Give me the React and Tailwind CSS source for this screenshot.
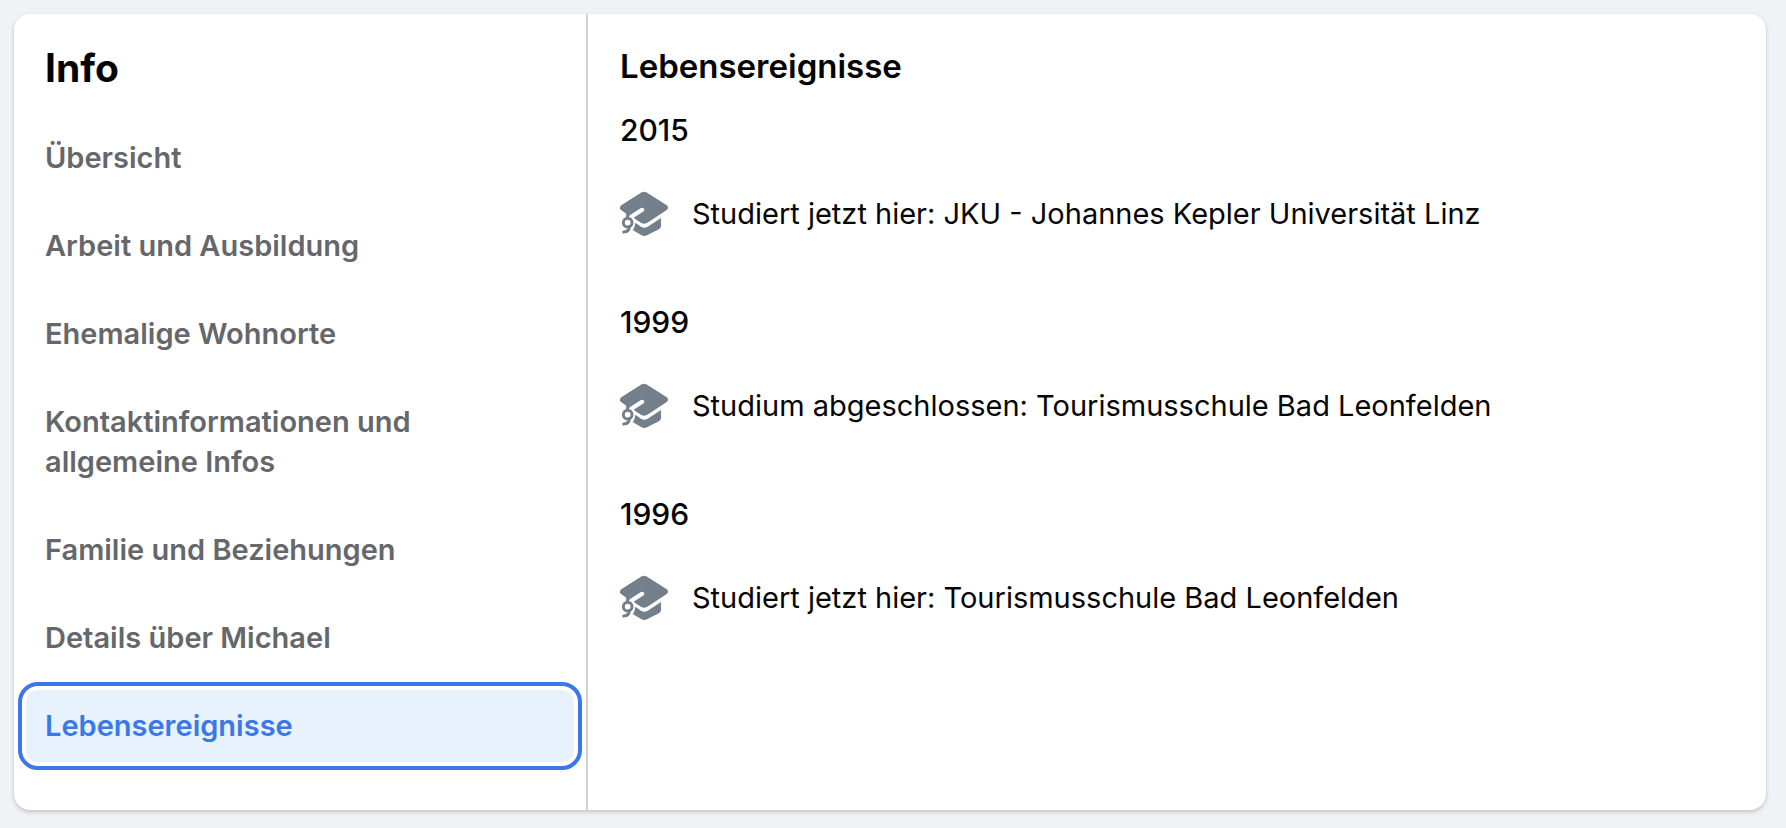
const sections = [
  { id: 'overview', label: 'Übersicht' },
  { id: 'work', label: 'Arbeit und Ausbildung' },
  { id: 'places', label: 'Ehemalige Wohnorte' },
  { id: 'contact', label: 'Kontaktinformationen und allgemeine Infos' },
  { id: 'family', label: 'Familie und Beziehungen' },
  { id: 'details', label: 'Details über Michael' },
  { id: 'events', label: 'Lebensereignisse' },
];

const lifeEvents = [
  { year: '2015', text: 'Studiert jetzt hier: JKU - Johannes Kepler Universität Linz' },
  { year: '1999', text: 'Studium abgeschlossen: Tourismusschule Bad Leonfelden' },
  { year: '1996', text: 'Studiert jetzt hier: Tourismusschule Bad Leonfelden' },
];

// Graduation cap with tassel
function CapIcon() {
  return (
    <svg viewBox="0 0 144 144" className="size-12 shrink-0 text-[#757e8b]" aria-hidden="true">
      <path
        fill="currentColor"
        d="M65 7Q72 3 79 7L138 44Q150 52 139 61L82 98Q73 104 64 99L44 86Q41 83 45 80L69 65Q75 61 72 56Q69 51 63 54L36 71Q31 74 28 77L4 61Q-6 53 5 45Z"
      />
      <path
        fill="currentColor"
        d="M46 98L63 110Q73 116 83 110L123 84V108Q123 113 118 117L81 136Q73 140 65 136L39 121Q44 112 46 98Z"
      />
      <g fill="none" stroke="currentColor" strokeLinecap="round">
        <path d="M23 68V84" strokeWidth="9" />
        <circle cx="23" cy="98" r="13" strokeWidth="9" />
        <path d="M28 110Q27 126 11 126" strokeWidth="9" />
      </g>
    </svg>
  );
}

function NavItem({ label, active }) {
  return (
    <a
      href="#"
      aria-current={active ? 'page' : undefined}
      className={
        active
          ? 'block rounded-xl bg-[#e7f2fd] px-[19px] py-4 text-[#3b78e7] outline-4 outline-offset-4 outline-[#3b78e7]'
          : 'block rounded-xl px-[19px] py-4 text-[#65676b]'
      }
    >
      <span className="block max-w-[420px]">{label}</span>
    </a>
  );
}

export default function App() {
  return (
    <div className="min-h-screen bg-[#f0f2f5] pt-3.5 pr-5 pb-4 pl-3.5 font-['Inter',sans-serif] text-[#050505]">
      <main className="flex rounded-2xl bg-white shadow-[0_2px_4px_rgba(0,0,0,0.2)]">
        {/* Navigation */}
        <aside className="w-1/3 max-w-[574px] shrink-0 border-r-2 border-[#ced0d4] px-3 pt-[30px] pb-12">
          <h1 className="px-[19px] text-[39px] leading-[48px] font-bold">Info</h1>
          <nav className="mt-[30px] flex flex-col gap-4 text-[29px] leading-[40px] font-semibold">
            {sections.map((s) => (
              <NavItem key={s.id} label={s.label} active={s.id === 'events'} />
            ))}
          </nav>
        </aside>

        {/* Lebensereignisse */}
        <section className="min-w-0 flex-1 px-8 pt-8">
          <h2 className="text-[33px] leading-[40px] font-semibold">Lebensereignisse</h2>
          {lifeEvents.map((ev) => (
            <div key={ev.year} className="pt-6 pb-10">
              <h3 className="text-[30px] leading-[40px] font-medium">{ev.year}</h3>
              <div className="mt-10 flex items-center gap-6">
                <CapIcon />
                <p className="text-[29px] leading-[40px]">{ev.text}</p>
              </div>
            </div>
          ))}
        </section>
      </main>
    </div>
  );
}
